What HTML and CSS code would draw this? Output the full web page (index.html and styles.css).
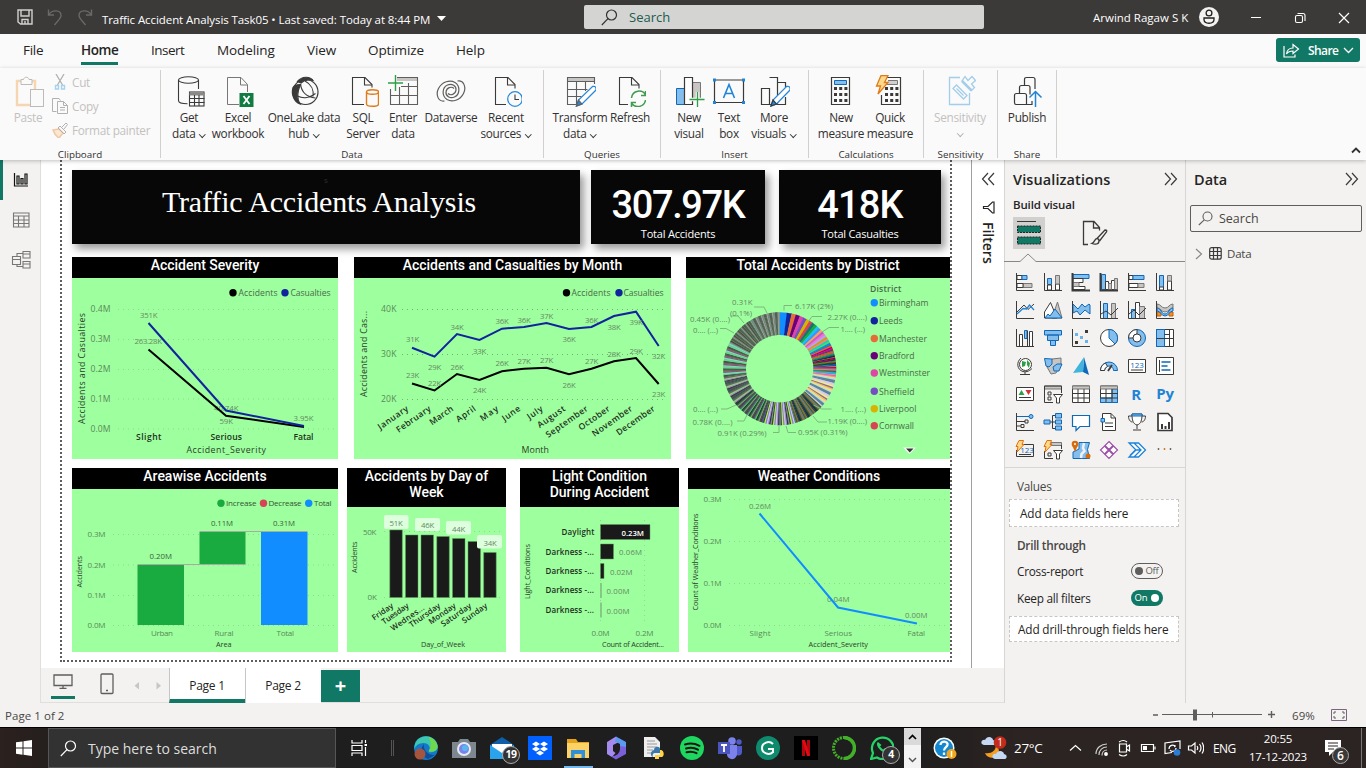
FILE: index.html
```html
<!DOCTYPE html>
<html lang="en">
<head>
<meta charset="utf-8">
<title>Traffic Accident Analysis Task05</title>
<link rel="stylesheet" href="styles.css">
</head>
<body>
<header class="titlebar">
  <div class="quick">
    <svg width="80" height="20" viewBox="0 0 80 20" fill="none">
      <g stroke="#d2d0ce" stroke-width="1.4"><path d="M1 3h14v14H3.500L1 15z"/><path d="M4 3v6h8V3M5 17v-4.500h6V17M8 14v3"/></g>
      <g stroke="#6b6967" stroke-width="1.400"><path d="M31.500 2.500v5.500h5.500M32 7.500c3-5 12-5 12 1 0 3-4 6-6.500 9.500"/><path d="M74.500 2.500v5.500H69M74 7.500c-3-5-12-5-12 1 0 3 4 6 6.500 9.500"/></g>
    </svg>
  </div>
  <div class="doc-name">Traffic Accident Analysis Task05 • Last saved: Today at 8:44 PM</div>
  <svg class="doc-caret" width="10" height="6"><path d="M0 0h9L4.500 5z" fill="#fff"/></svg>
  <div class="top-search">
    <svg width="17" height="17" viewBox="0 0 17 17" fill="none" stroke="#323130" stroke-width="1.200"><circle cx="10.500" cy="6" r="5"/><path d="M7 9.700L.8 16"/></svg>
    <span>Search</span>
  </div>
  <div class="user">Arwind Ragaw S K</div>
  <svg class="avatar" width="20" height="20" viewBox="0 0 20 20"><circle cx="10" cy="10" r="10" fill="#f3f2f1"/><g fill="none" stroke="#201f1e" stroke-width="1.300"><circle cx="10" cy="6" r="2.900"/><path d="M5 11h10v1.500c0 5-10 5-10 0z"/></g></svg>
  <div class="winbtns">
    <svg width="44" height="34" viewBox="0 0 44 34"><path d="M17 17.500h10" stroke="#fff"/></svg>
    <svg width="44" height="34" viewBox="0 0 44 34" fill="none" stroke="#fff" stroke-width="1.100"><rect x="17.500" y="15.500" width="7" height="7" rx="1.500"/><path d="M19.500 13.500h5.500q2 0 2 2v5.500"/></svg>
    <svg width="44" height="34" viewBox="0 0 44 34"><path d="M17 13l10 10M27 13L17 23" stroke="#fff" stroke-width="1.200"/></svg>
  </div>
</header>

<nav class="tabs">
  <a>File</a><a class="active">Home</a><a>Insert</a><a>Modeling</a><a>View</a><a>Optimize</a><a>Help</a>
  <button class="share">
    <svg width="17" height="15" viewBox="0 0 17 15" fill="none" stroke="#fff" stroke-width="1.200"><path d="M1 3v11h11v-2.500"/><path d="M3.500 11c.5-4 3-6 6.500-6V1.500L15.500 6 10 10.500V8c-3 0-5 .8-6.500 3z"/></svg>
    <span>Share</span>
    <svg width="11" height="7" viewBox="0 0 11 7" fill="none" stroke="#fff" stroke-width="1.300"><path d="M1 1l4.500 4.500L10 1"/></svg>
  </button>
</nav>

<section class="ribbon">
  <div class="group g-clip">
    <div class="tools disabled">
      <div class="btn paste">
        <svg width="32" height="32" viewBox="0 0 32 32" fill="none"><path d="M9 6H5v24h13M23 14V6h-4" stroke="#f5d6b0" stroke-width="2.400"/><path d="M9 4.500h2.500c.5-3 5-3 5.500 0H20v5H9z" fill="#fafafa" stroke="#bdbbb9"/><rect x="18.500" y="14.500" width="13" height="17" fill="#fafafa" stroke="#bdbbb9"/></svg>
        <span>Paste</span>
      </div>
      <div class="small-list">
        <div><svg width="16" height="16" viewBox="0 0 16 16" fill="none"><path d="M4 0l6.500 11M12 0L5.500 11" stroke="#b3b1af" stroke-width="1.300"/><path d="M3.500 11.500h3v3.500h-3zM9.500 11.500h3v3.500h-3z" stroke="#a6d2ee" stroke-width="1.400"/></svg><span>Cut</span></div>
        <div><svg width="16" height="16" viewBox="0 0 16 16" fill="none" stroke="#b3b1af"><path d="M4.500 13.500h-4V.5h6.500l1.500 2"/><path d="M5.500 3.500h6l4 4v8h-10z"/><path d="M11.500 3.500v4h4M8 9.500h5M8 12h5"/></svg><span>Copy</span></div>
        <div><svg width="16" height="16" viewBox="0 0 16 16" fill="none"><path d="M1 8l6-1 4 4-4 5C4 14 2 11 1 8z" stroke="#f0c8a4" stroke-width="1.500" fill="#fbe8d4"/><path d="M6 6l2-2 6 6-2 2zM10 5l4-4 1.500 1.500-3.500 4.500" stroke="#b3b1af"/></svg><span>Format painter</span></div>
      </div>
    </div>
    <div class="label">Clipboard</div>
  </div>
  <div class="group g-data">
    <div class="tools">
      <div class="btn w40"><svg width="32" height="32" viewBox="0 0 32 32" fill="none" stroke="#3b3a39" stroke-width="1.100"><ellipse cx="15.500" cy="5" rx="10" ry="3.200"/><path d="M5.500 5v20.500c0 2 4 3.300 9 3.300M25.500 5v9"/><rect x="16.500" y="17" width="14.500" height="14"/><path d="M16.500 19h15" stroke="#8a8886" stroke-width="3"/><path d="M16.500 23.500h15M16.500 27.500h15M21.500 20v11M26 20v11"/></svg><span>Get<br>data<i class="chev"></i></span></div>
      <div class="btn w58"><svg width="32" height="32" viewBox="0 0 32 32" fill="none" stroke="#797775"><path d="M17 29.500H5.500v-27H19l6.500 7V17"/><path d="M18.500 2.500v7.500h7"/><rect x="17.500" y="18" width="14" height="14" fill="#107c41" stroke="none"/><path d="M21.500 21l6 8M27.500 21l-6 8" stroke="#fff" stroke-width="1.800"/></svg><span>Excel<br>workbook</span></div>
      <div class="btn w74"><svg width="32" height="32" viewBox="0 0 32 32" fill="none" stroke="#3b3a39" stroke-width="1.200"><circle cx="17.500" cy="17" r="12.500"/><path d="M9.500 6.500C14 1 22 1 25 5.500c-5-1.500-9-.5-12 2.500z" fill="#3b3a39"/><path d="M5 12.500c-2 7 1 14 7 16.500-3.500-6-3-12 .5-19.500-3 0-6 .5-7.500 3z" fill="#3b3a39"/><path d="M12.500 9c1 8 6 13 15 14M17 6c6 3 9 9 8 15.500M9.500 21c6 3 13 1.500 18-2.500"/></svg><span>OneLake data<br>hub<i class="chev"></i></span></div>
      <div class="btn w44"><svg width="32" height="32" viewBox="0 0 32 32" fill="none" stroke="#3b3a39" stroke-width="1.100"><path d="M17 29.500H5.500v-27H18l7 7v3"/><path d="M17.500 2.500v7.500h7.500"/><g stroke="#e07b1a" stroke-width="1.400"><ellipse cx="25.500" cy="17" rx="6" ry="2.200"/><path d="M19.500 17v12c0 3 12 3 12 0V17"/></g></svg><span>SQL<br>Server</span></div>
      <div class="btn w36"><svg width="32" height="32" viewBox="0 0 32 32" fill="none" stroke="#605e5c" stroke-width="1.100"><path d="M10 4h20.500" stroke="#c8c6c4" stroke-width="4"/><path d="M10 2.500h20.500v27h-27V14M3.500 20.500h27M14 11.500h16.500M12.500 12v17M21.500 8v21"/><path d="M1 8h15M8.500 0v16" stroke="#2f9e44" stroke-width="1.400"/></svg><span>Enter<br>data</span></div>
      <div class="btn w60"><svg width="32" height="32" viewBox="0 0 32 32" fill="none" stroke="#605e5c" stroke-width="1.200"><path d="M9.500 26C3 27 .5 19.500 3.500 13.500 7 6.500 15 4.500 20 7.500c5.500 3.500 5 12-.5 14.500-4.500 2-9-1-8.500-5 .5-4.500 5.500-6 8-3.500"/><path d="M22.500 6c6.500-1 9 6.500 6 12.500-3.500 7-11.500 9-16.500 6-5.500-3.500-5-12 .5-14.500 4.500-2 9 1 8.500 5-.5 4.500-5.500 6-8 3.500"/></svg><span>Dataverse</span></div>
      <div class="btn w50"><svg width="32" height="32" viewBox="0 0 32 32" fill="none" stroke="#3b3a39" stroke-width="1.100"><path d="M16 29.500H5.500v-27H18l7 7v4"/><path d="M17.500 2.500v7.500h7.500"/><circle cx="25" cy="24" r="7.300" stroke="#2b88d8" stroke-width="1.300"/><path d="M25 19.500V24.500h4"/></svg><span>Recent<br>sources<i class="chev"></i></span></div>
    </div>
    <div class="label">Data</div>
  </div>
  <div class="group g-query">
    <div class="tools">
      <div class="btn w56"><svg width="32" height="32" viewBox="0 0 32 32" fill="none" stroke="#605e5c" stroke-width="1.100"><path d="M3 4h27" stroke="#c8c6c4" stroke-width="4"/><path d="M30.500 9V2.500h-27v27H14M3.500 6.500h27M3.500 14.500h20M3.500 21.500h14M12.500 7v22M21.500 7v9"/><path d="M12.500 31l2-6L28.500 11.500q4-1 3.500 3.500L18 29z" fill="#fff" stroke="#2b88d8" stroke-width="1.300"/><path d="M12.500 31l2-6 3.500 4z" fill="#2b88d8"/></svg><span>Transform<br>data<i class="chev"></i></span></div>
      <div class="btn w44"><svg width="32" height="32" viewBox="0 0 32 32" fill="none" stroke="#3b3a39" stroke-width="1.100"><path d="M14 29.500H5.500v-27H18l7 7v4"/><path d="M17.500 2.500v7.500h7.500"/><g stroke="#3f9b4f" stroke-width="1.500"><path d="M17.500 23c1-8 11-9 14-3M31.500 16v4.500H27M31.500 25c-1 7-10 9-14 3M17.500 32v-4.500H22"/></g></svg><span>Refresh</span></div>
    </div>
    <div class="label">Queries</div>
  </div>
  <div class="group g-insert">
    <div class="tools">
      <div class="btn w40"><svg width="32" height="32" viewBox="0 0 32 32" fill="none"><path d="M3.500 13.500h8v16h-8z" fill="#83beec" stroke="#1068b8"/><path d="M19.500 7.500h8v17h-8z" fill="#c8c6c4" stroke="#797775"/><path d="M11.500 2.500h8v27h-8z" fill="#fff" stroke="#3b3a39" stroke-width="1.200"/><path d="M16.500 24.500h15M24.500 17v15" stroke="#fafafa" stroke-width="3.500"/><path d="M16.500 24.500h15M24.500 17v15" stroke="#2f9e44" stroke-width="1.300"/></svg><span>New<br>visual</span></div>
      <div class="btn w40"><svg width="32" height="32" viewBox="0 0 32 32" fill="none"><path d="M1.500 5h29v22.500h-29z" stroke="#3b3a39" stroke-width="1.200"/><path d="M0 3.500h3v3H0zM29 3.500h3v3h-3zM0 26h3v3H0zM29 26h3v3h-3z" fill="#1f84d6"/><path d="M10.500 23L16 9.500 21.500 23M12.500 18.500h7" stroke="#1f84d6" stroke-width="1.600"/></svg><span>Text<br>box</span></div>
      <div class="btn w50"><svg width="32" height="32" viewBox="0 0 32 32" fill="none" stroke="#3b3a39" stroke-width="1.200"><path d="M3.500 13.500h8v16h-8zM11.500 2.500h8v27h-8M19.500 7.500h8v5M27.500 22v7.500H19"/><path d="M13 31l2-6L28.500 11.500q4-1 3.500 3.500L18.500 29z" fill="#fff" stroke="#2b88d8" stroke-width="1.300"/><path d="M13 31l2-6 3.500 4z" fill="#2b88d8"/></svg><span>More<br>visuals<i class="chev"></i></span></div>
    </div>
    <div class="label">Insert</div>
  </div>
  <div class="group g-calc">
    <div class="tools">
      <div class="btn w50"><svg width="32" height="32" viewBox="0 0 32 32" fill="none"><path d="M6.500 2.500h18v27h-18z" stroke="#3b3a39" stroke-width="1.200"/><path d="M9.500 5.500h12v4h-12z" fill="#83beec" stroke="#1068b8"/><path d="M9 13.500h14M9 19.500h14M9 25.500h14" stroke="#3b3a39" stroke-width="3" stroke-dasharray="3 2.200"/></svg><span>New<br>measure</span></div>
      <div class="btn w48"><svg width="32" height="32" viewBox="0 0 32 32" fill="none"><path d="M12 2.500h14.500v27h-19V20" stroke="#3b3a39" stroke-width="1.200"/><path d="M14 5.500h9.500v4H12" fill="#d2d0ce" stroke="#797775"/><path d="M11 13.500h14M11 19.500h14M11 25.500h14" stroke="#3b3a39" stroke-width="3" stroke-dasharray="3 2.200"/><path d="M7 .5h7l-3.500 7H14L4 19l2.500-8H2.500z" fill="#fcd98b" stroke="#e07b1a" stroke-width="1.300"/></svg><span>Quick<br>measure</span></div>
    </div>
    <div class="label">Calculations</div>
  </div>
  <div class="group g-sens">
    <div class="tools disabled">
      <div class="btn w60"><svg width="32" height="32" viewBox="0 0 32 32" fill="none" stroke="#a3cde8" stroke-width="1.300"><path d="M16 2.500H5.500v27h20V18"/><path d="M9 13.500l3.500-3.500L23 20.500l-3.500 3.500zM12.500 13.500l7 7"/><path d="M18 6l9.500 9.500 3-3-3-3.500 4-3.500-3.500-4-4 4-3-4z"/><path d="M18 6l9.500 9.500" stroke-width="2.500"/></svg><span>Sensitivity<br><i class="chev lone"></i></span></div>
    </div>
    <div class="label">Sensitivity</div>
  </div>
  <div class="group g-share">
    <div class="tools">
      <div class="btn w58"><svg width="32" height="32" viewBox="0 0 32 32" fill="none" stroke="#3b3a39" stroke-width="1.200"><path d="M5.500 18.500h8q2 0 2 2v9H5q-1.500 0-1.500-2v-7q0-2 2-2zM8.500 18v-5.500q0-2 2-2H17q2 0 2 2v7M13.500 10V4.500q0-2 2-2H22q2 0 2 2V14M15.500 29.500H21V26"/><path d="M24.500 32V16.500M18.500 22.500l6-6 6 6" stroke="#1f84d6" stroke-width="1.500"/></svg><span>Publish</span></div>
    </div>
    <div class="label">Share</div>
  </div>
  <svg class="collapse" width="10" height="7" viewBox="0 0 10 7"><path d="M1 5.500l4-4 4 4" fill="none" stroke="#323130" stroke-width="1.800"/></svg>
</section>

<main class="workspace">
  <aside class="rail">
    <div class="sel"><svg width="18" height="18" viewBox="0 0 18 18" fill="none" stroke="#111" stroke-width="1.200"><path d="M2.500 2v13H16M5 5h2v8H5zM9 7.500h2V13H9zM13 3h2v10h-2z"/></svg></div>
    <div><svg width="18" height="18" viewBox="0 0 18 18" fill="none" stroke="#797775" stroke-width="1.100"><path d="M1.500 2h15.500v14H1.500zM1.500 5h15.500M1.500 9h15.500M1.500 12.500h15.500M6.500 5v11M12 5v11"/></svg></div>
    <div><svg width="20" height="20" viewBox="0 0 20 20" fill="none" stroke="#797775" stroke-width="1.100"><path d="M1.500 6.500h8v8h-8zM1.500 9.500h8M12 1.500h7v6.500h-7zM12 4h7M12 11.500h7v6.500h-7zM12 14h7M6 6V3.500h6M6 15v1.500h6"/></svg></div>
  </aside>

  <div class="center">
    <div class="upper">
      <div class="canvas">
        <div class="page">
          <div class="row row1">
            <div class="banner"><small>s</small>Traffic Accidents Analysis</div>
            <div class="card c1"><b>307.97K</b><span>Total Accidents</span></div>
            <div class="card c2"><b>418K</b><span>Total Casualties</span></div>
          </div>
          <div class="row row2">
            <div class="visual v266"><h3>Accident Severity</h3>
              <svg width="266" height="181" viewBox="72 278 266 181">
                <g class="grid"><path d="M118 309.500H334M118 339.500H334M118 369.500H334M118 399H334M118 429H334"/></g>
                <circle cx="233" cy="292.700" r="3.700" fill="#000"/><text class="lg" x="238.500" y="296" textLength="39">Accidents</text>
                <circle cx="285" cy="292.700" r="3.700" fill="#12239e"/><text class="lg" x="290.500" y="296" textLength="40">Casualties</text>
                <g class="ax"><text x="90.500" y="312" textLength="20">0.4M</text><text x="90.500" y="342" textLength="20">0.3M</text><text x="90.500" y="372" textLength="20">0.2M</text><text x="90.500" y="402" textLength="20">0.1M</text><text x="90.500" y="432" textLength="20">0.0M</text></g>
                <text class="tt" transform="translate(85 424) rotate(-90)" textLength="111">Accidents and Casualties</text>
                <g class="dl"><text x="140" y="318" textLength="17.500">351K</text><text x="134.500" y="344" textLength="27.500">263.28K</text><text x="214" y="411" textLength="24.500">40.74K</text><text x="219.500" y="424" textLength="13.500">59K</text><text x="293.500" y="421" textLength="20">3.95K</text></g>
                <path class="ln" stroke="#000" d="M148.500 349.500L226 415.700L304 427"/>
                <path class="ln" stroke="#12239e" d="M148.500 323L226 410.500L304 426"/>
                <g class="cat"><text x="136" y="439.700" textLength="25.500">Slight</text><text x="210.500" y="439.700" textLength="31.500">Serious</text><text x="293.500" y="439.700" textLength="20">Fatal</text></g>
                <text class="tt" x="186.500" y="453" textLength="79.500">Accident_Severity</text>
              </svg></div>
            <div class="visual v317"><h3>Accidents and Casualties by Month</h3>
              <svg width="317" height="181" viewBox="354 278 317 181">
                <g class="grid strong"><path d="M402 309.500H667M402 354.500H667M402 399.500H667"/></g>
                <circle cx="566.500" cy="292.700" r="3.700" fill="#000"/><text class="lg" x="571.500" y="296" textLength="39">Accidents</text>
                <circle cx="619" cy="292.700" r="3.700" fill="#12239e"/><text class="lg" x="623.500" y="296" textLength="40">Casualties</text>
                <g class="ax"><text x="381" y="312" textLength="15.500">40K</text><text x="381" y="357" textLength="15.500">30K</text><text x="381" y="402" textLength="15.500">20K</text></g>
                <text class="tt" transform="translate(367 397) rotate(-90)" textLength="86">Accidents and Cas...</text>
                <path class="ln" stroke="#12239e" d="M412 347.700L434.500 356.700L457 334L479.500 340L502 328.700L524 327L546.500 323L569 329L591.500 327L614 316L636 311.700L658.700 346"/>
                <path class="ln" stroke="#000" d="M412 383.500L434.500 390.500L457 374L479.500 380L502 371.200L524 368.700L546.500 367.700L569 374.300L591.500 368.700L614 361.300L636 358L658.700 384"/>
                <g class="dl mid"><text x="412.500" y="342">31K</text><text x="434.500" y="370">29K</text><text x="457" y="329.500">34K</text><text x="479.500" y="353.500">33K</text><text x="502" y="323.500">36K</text><text x="524" y="322.500">36K</text><text x="546.500" y="318.500">37K</text><text x="569" y="342">36K</text><text x="591.500" y="322.500">36K</text><text x="614" y="330">38K</text><text x="636" y="325">39K</text><text x="658.500" y="359">32K</text>
                <text x="412.500" y="378">23K</text><text x="434.500" y="385.500">22K</text><text x="457" y="369.500">26K</text><text x="479.500" y="393">24K</text><text x="502" y="366">26K</text><text x="524" y="363.500">27K</text><text x="546.500" y="362.500">27K</text><text x="569" y="388">26K</text><text x="591.500" y="363.500">27K</text><text x="614" y="356.500">28K</text><text x="636" y="353.500">29K</text><text x="658.500" y="397">23K</text></g>
                <g class="cat rot"><text transform="translate(409 410) rotate(-35)" textLength="35">January</text><text transform="translate(431.500 410) rotate(-35)" textLength="40">February</text><text transform="translate(454 410) rotate(-35)" textLength="27">March</text><text transform="translate(476.500 410) rotate(-35)" textLength="22">April</text><text transform="translate(499 410) rotate(-35)" textLength="20">May</text><text transform="translate(521 410) rotate(-35)" textLength="20">June</text><text transform="translate(543.500 410) rotate(-35)" textLength="17">July</text><text transform="translate(566 410) rotate(-35)" textLength="32">August</text><text transform="translate(588.500 410) rotate(-35)" textLength="49">September</text><text transform="translate(610.500 410) rotate(-35)" textLength="36">October</text><text transform="translate(633 410) rotate(-35)" textLength="47">November</text><text transform="translate(655.500 410) rotate(-35)" textLength="45">December</text></g>
                <text class="tt" x="521.500" y="453" textLength="27.500">Month</text>
              </svg></div>
            <div class="visual v264"><h3>Total Accidents by District</h3>
              <svg width="264" height="181" viewBox="686 278 264 181">
                <g id="donut"></g>
                <path class="lead" d="M784 310.500v-5h8M808 322l4-5.500h10M822 332l7-4.500h10M813.500 405l8 4h10M813 416l5 6h9M786 426l2 6.500h8M779 426v6.500h-6M747 415l-3 6h-7M736 405l-9 4h-6M734 333l-8-4.500h-6M744 323l-6-7h-7M767 313l-3-6h-10"/>
                <g class="dl"><text x="795" y="309" textLength="38">6.17K (2%)</text><text x="827.500" y="320" textLength="39.500">2.27K (0....)</text><text x="840.500" y="332" textLength="24.500">1.... (...)</text><text x="732" y="305" textLength="20.500">0.31K</text><text x="730" y="316" textLength="22">(0.1%)</text><text x="690" y="322" textLength="40">0.45K (0....)</text><text x="693" y="333" textLength="25">0.... (...)</text><text x="693" y="411.500" textLength="25">0.... (...)</text><text x="692.500" y="425" textLength="40">0.78K (0....)</text><text x="717.500" y="436" textLength="49">0.91K (0.29%)</text><text x="798" y="435" textLength="49.500">0.95K (0.31%)</text><text x="827.500" y="424" textLength="39.500">1.19K (0....)</text><text x="840.500" y="412" textLength="25.500">1.... (...)</text></g>
                <text class="lg bold" x="870" y="291.500" textLength="31.500">District</text>
                <g class="lg"><text x="879" y="306" textLength="49.500">Birmingham</text><text x="879" y="324" textLength="23.500">Leeds</text><text x="879" y="342" textLength="48">Manchester</text><text x="879" y="359" textLength="35.500">Bradford</text><text x="879" y="376.300" textLength="51">Westminster</text><text x="879" y="394.600" textLength="35.500">Sheffield</text><text x="879" y="412" textLength="37.500">Liverpool</text><text x="879" y="429" textLength="35">Cornwall</text></g>
                <circle cx="874.300" cy="302.700" r="3.700" fill="#118dff"/><circle cx="874.300" cy="320.700" r="3.700" fill="#12239e"/><circle cx="874.300" cy="338.500" r="3.700" fill="#e66c37"/><circle cx="874.300" cy="355.700" r="3.700" fill="#6b007b"/><circle cx="874.300" cy="373" r="3.700" fill="#e044a7"/><circle cx="874.300" cy="391.300" r="3.700" fill="#744ec2"/><circle cx="874.300" cy="408.700" r="3.700" fill="#d9b300"/><circle cx="874.300" cy="425.700" r="3.700" fill="#d64550"/>
                <path d="M903 447.500h13l-6.500 6.500z" fill="#fff"/><path d="M906 448.500h7.500l-3.700 4z" fill="#333"/>
              </svg></div>
          </div>
          <div class="row row3">
            <div class="visual v266"><h3>Areawise Accidents</h3>
              <svg width="266" height="163" viewBox="72 489 266 163">
                <g class="grid"><path d="M113 534.500H334M113 565H334M113 595.500H334M113 625.500H334"/></g>
                <circle cx="221" cy="503.300" r="3.700" fill="#1aab40"/><text class="lg s" x="226" y="506.300" textLength="30.500">Increase</text>
                <circle cx="263.500" cy="503.300" r="3.700" fill="#d64554"/><text class="lg s" x="268.500" y="506.300" textLength="33">Decrease</text>
                <circle cx="308.700" cy="503.300" r="3.700" fill="#118dff"/><text class="lg s" x="314" y="506.300" textLength="17.500">Total</text>
                <g class="ax s"><text x="87.500" y="537" textLength="18">0.3M</text><text x="87.500" y="567.500" textLength="18">0.2M</text><text x="87.500" y="598" textLength="18">0.1M</text><text x="87.500" y="628" textLength="18">0.0M</text></g>
                <text class="tt s" transform="translate(82 587.500) rotate(-90)" textLength="31.500">Accidents</text>
                <path d="M137.500 565h46.500v60h-46.500zM199.500 532h46v32.500h-46z" fill="#1aab40"/><path d="M261 532h46.500v93H261z" fill="#118dff"/>
                <path d="M137.500 564.500h108M199.500 531.500h108" stroke="#a8aaa6"/>
                <g class="dl dark"><text x="149.500" y="559" textLength="22.500">0.20M</text><text x="211" y="526" textLength="22">0.11M</text><text x="273" y="526" textLength="22">0.31M</text></g>
                <g class="ax s"><text x="151" y="636.300" textLength="22">Urban</text><text x="214.500" y="636.300" textLength="19">Rural</text><text x="276.500" y="636.300" textLength="17.500">Total</text></g>
                <text class="tt s" x="216" y="647" textLength="15.500">Area</text>
              </svg></div>
            <div class="visual v159"><h3 class="two">Accidents by Day of<br>Week</h3>
              <svg width="159" height="145" viewBox="347 507 159 145">
                <g class="grid"><path d="M384 531.500H502M384 597.500H502"/></g>
                <g class="ax s"><text x="363" y="534.500" textLength="13.500">50K</text><text x="367.500" y="600" textLength="9.500">0K</text></g>
                <text class="tt s" transform="translate(357 573) rotate(-90)" textLength="31.500">Accidents</text>
                <g fill="#1a1a1a" stroke="#5b9a5b" stroke-width=".5"><path d="M389.800 530h12.500v67.500h-12.500zM405.500 535h12.500v62.500h-12.500zM421 535h12.500v62.500H421zM436.800 536.500h12.500v61h-12.500zM452.500 538.500H465v59h-12.500zM468 541.500h12.500v56H468zM483.700 552.500h12.500v45h-12.500z"/></g>
                <g fill="#ddffdd"><rect x="384" y="515" width="24.500" height="14" rx="2"/><rect x="415" y="518" width="25" height="13" rx="2"/><rect x="446" y="521" width="25" height="13.500" rx="2"/><rect x="477" y="535" width="25" height="13.500" rx="2"/></g>
                <g class="dl mid"><text x="396" y="526">51K</text><text x="427.500" y="528">46K</text><text x="458.500" y="532">44K</text><text x="490" y="546">34K</text></g>
                <g class="cat rot s"><text transform="translate(394 607) rotate(-35)" textLength="24">Friday</text><text transform="translate(409.500 607) rotate(-35)" textLength="31">Tuesday</text><text transform="translate(425 609) rotate(-35)" textLength="39">Wednes...</text><text transform="translate(441 607) rotate(-35)" textLength="36">Thursday</text><text transform="translate(456.500 607) rotate(-35)" textLength="31">Monday</text><text transform="translate(472 607) rotate(-35)" textLength="35">Saturday</text><text transform="translate(488 607) rotate(-35)" textLength="29">Sunday</text></g>
                <text class="tt s" x="421" y="647" textLength="44">Day_of_Week</text>
              </svg></div>
            <div class="visual v159 light"><h3 class="two">Light Condition<br>During Accident</h3>
              <svg width="159" height="145" viewBox="520 507 159 145">
                <g class="grid"><path d="M600.500 520V621M644.500 520V621"/></g>
                <text class="tt s" transform="translate(530 599) rotate(-90)" textLength="55">Light_Conditions</text>
                <g class="cat s"><text x="561.500" y="535" textLength="33">Daylight</text><text x="545.500" y="554.500" textLength="48.500">Darkness -...</text><text x="545.500" y="574" textLength="48.500">Darkness -...</text><text x="545.500" y="593" textLength="48.500">Darkness -...</text><text x="545.500" y="613" textLength="48.500">Darkness -...</text></g>
                <path d="M600.500 524.500H650v15h-49.500zM600.500 544h13v15h-13zM600.500 563.500h3.500v15h-3.500z" fill="#1a1a1a" stroke="#5b9a5b" stroke-width=".5"/><path d="M601 583v15M601 602.500v15" stroke="#7dba7d" stroke-width="1.500"/>
                <text class="dl white" x="621.500" y="535.700" textLength="22.500">0.23M</text>
                <g class="dl"><text x="619" y="555" textLength="23">0.06M</text><text x="610" y="575" textLength="22.500">0.02M</text><text x="606.500" y="594" textLength="23">0.00M</text><text x="606.500" y="614" textLength="23">0.00M</text></g>
                <g class="ax s"><text x="591.500" y="636" textLength="18">0.0M</text><text x="635.500" y="636" textLength="18">0.2M</text></g>
                <text class="tt s" x="602" y="647" textLength="62">Count of Accident...</text>
              </svg></div>
            <div class="visual v262"><h3>Weather Conditions</h3>
              <svg width="262" height="163" viewBox="688 489 262 163">
                <g class="grid"><path d="M729 499.500H946M729 541.500H946M729 583.500H946M729 625.500H946"/></g>
                <g class="ax s"><text x="703.500" y="502" textLength="18">0.3M</text><text x="703.500" y="544" textLength="18">0.2M</text><text x="703.500" y="586" textLength="18">0.1M</text><text x="703.500" y="628" textLength="18">0.0M</text></g>
                <text class="tt s" transform="translate(698 610.500) rotate(-90)" textLength="97">Count of Weather_Conditions</text>
                <g class="dl"><text x="749" y="509" textLength="22">0.26M</text><text x="827" y="602" textLength="22.500">0.04M</text><text x="905" y="618" textLength="22.500">0.00M</text></g>
                <path class="ln" stroke="#118dff" d="M759.500 513.500L838 607.500L917 623.500"/>
                <g class="ax s"><text x="749.500" y="636.300" textLength="21">Slight</text><text x="824.500" y="636.300" textLength="27.500">Serious</text><text x="907.500" y="636.300" textLength="17.500">Fatal</text></g>
                <text class="tt s" x="808.500" y="647" textLength="59.500">Accident_Severity</text>
              </svg></div>
          </div>
        </div>
      </div>
      <div class="filters">
        <svg width="14" height="14" viewBox="0 0 14 14" fill="none" stroke="#3b3a39" stroke-width="1.200"><path d="M7 1L1.500 7 7 13M13 1L7.500 7l5.500 6"/></svg>
        <svg width="13" height="13" viewBox="0 0 13 13" fill="none" stroke="#252423" stroke-width="1.200"><path d="M12 1v11h-1.500L6 7.500H1.500v-2H6L10.500 1z"/></svg>
        <span>Filters</span>
      </div>
    </div>
    <div class="pagetabs">
      <div class="dev on"><svg width="20" height="16" viewBox="0 0 20 16" fill="none" stroke="#605e5c" stroke-width="1.300"><path d="M1 1h18v10.500H1zM10 11.500V14M6.500 14.300h7"/></svg></div>
      <div class="dev"><svg width="14" height="22" viewBox="0 0 14 22" fill="none" stroke="#605e5c" stroke-width="1.300"><rect x="1" y="1" width="12" height="19.500" rx="1"/><path d="M6 17.500h2"/></svg></div>
      <svg class="pgarrows" width="28" height="10" viewBox="0 0 28 10" fill="#c8c6c4"><path d="M5 1v7.500L.5 4.700zM22.500 1v7.500L27 4.700z"/></svg>
      <div class="pg on">Page 1</div><div class="pg">Page 2</div><div class="plus">+</div>
    </div>
  </div>

  <aside class="viz">
    <div class="head"><span>Visualizations</span><svg width="14" height="14" viewBox="0 0 14 14" fill="none" stroke="#3b3a39" stroke-width="1.200"><path d="M1 1l5.500 6L1 13M7 1l5.500 6L7 13"/></svg></div>
    <div class="sub">Build visual</div>
    <div class="modes">
      <div class="mode on"><svg width="26" height="26" viewBox="0 0 26 26"><path d="M1 1.500h19" stroke="#3b3a39"/><path d="M1.500 6h23v6.500h-23zM1.500 17h23v7h-23z" fill="#117865" stroke="#252423" stroke-dasharray="2 1"/></svg></div>
      <div class="mode"><svg width="26" height="26" viewBox="0 0 26 26" fill="none" stroke="#3b3a39" stroke-width="1.300"><path d="M6 24.500H1.500v-23H12l5.500 6v3M11.500 1.500V8h6M10 23.500c2.500-.5 2.500-5 5-5s3 4.500-.5 5.500c-1.500.4-3 .2-4.500-.5zM15 18.500L23 10q2.500 0 1.500 2L17.500 21"/></svg></div>
    </div>
    <svg class="notch" width="181" height="9" viewBox="0 0 181 9"><path d="M0 8.500h16l8-7.500 8 7.500h149" fill="none" stroke="#8a8886"/></svg>
    <div class="vgrid">
      <svg viewBox="0 0 20 20"><path class="w" d="M2 3.500h5v4H2z"/><path class="b" d="M7 3.500h5v4H7z"/><path class="g" d="M8 11.500h9v4H8z"/><path class="w" d="M2 11.500h6v4H2z"/><path class="k" d="M1.500 1v17.500H19"/></svg>
      <svg viewBox="0 0 20 20"><path class="b" d="M4.500 6.500h4v6h-4z"/><path class="w" d="M4.500 13h4v5h-4zM12.500 12h4v6h-4z"/><path class="g" d="M12.500 3.500h4v8.500h-4z"/><path class="k" d="M1.500 1v17.500H19"/></svg>
      <svg viewBox="0 0 20 20"><path class="b" d="M2 2.500h16v4H2z"/><path class="w" d="M2 6.500h10v4H2zM2 14.500h12v3H2z"/><path class="g" d="M2 10.500h6v4H2z"/><path class="k" d="M1.500 1v17.500H19" stroke-width="2"/></svg>
      <svg viewBox="0 0 20 20"><path class="b" d="M2.500 2.500h4v15h-4z"/><path class="w" d="M6.500 9.500h3v8h-3zM12.500 8.500h3v9h-3z"/><path class="g" d="M9.500 11.500h3v6h-3zM15.500 6.500h3v11h-3z"/><path class="k" d="M1.500 1v17.500H19" stroke-width="2"/></svg>
      <svg viewBox="0 0 20 20"><path class="w" d="M2 3.500h4v4H2zM2 11.500h9v4H2z"/><path class="b" d="M6 3.500h11v4H6z"/><path class="g" d="M11 11.500h6v4h-6z"/><path class="k" d="M1.500 1v17.500H19"/></svg>
      <svg viewBox="0 0 20 20"><path class="b" d="M4.500 3.500h4v12h-4z"/><path class="w" d="M12.500 9h4v9h-4zM4.500 15h4v3h-4z"/><path class="g" d="M12.500 3.500h4V9h-4z"/><path class="k" d="M1.500 1v17.500H19"/></svg>

      <svg viewBox="0 0 20 20"><path class="k" d="M1.500 1v17.500H19M2 12l7-7 4 4.500L19 4"/><path class="bl" d="M2 14l6-5.500L11.500 9 14.500 5l4.500 5"/></svg>
      <svg viewBox="0 0 20 20"><path class="g" d="M9 18l5.500-16 4.500 16z"/><path class="w" d="M1.500 18v-6l6-9.500L14 18z"/><path class="b" d="M2 18l3-4 2 2 5-7 7 9z"/></svg>
      <svg viewBox="0 0 20 20"><path class="b" d="M2 4l5 5 4-5 3 3 4-3 1 1v9l-5-4-5 5-3-4-4 2z"/><path class="k" d="M1.500 1v17.500H19"/></svg>
      <svg viewBox="0 0 20 20"><path class="b" d="M4.500 3.500h4v15h-4z"/><path class="g" d="M12.500 3.500h4v15h-4z"/><path class="k" d="M1.500 1v17.500H19M2 14l5-3 5 4 7-7"/></svg>
      <svg viewBox="0 0 20 20"><path class="b" d="M4.500 9.500h4v9h-4z"/><path class="w" d="M8.500 2.500h4v16h-4z"/><path class="g" d="M12.500 6.500h5v12h-5z"/><path class="k" d="M1.500 1v17.500H19M2 14l5-4 5 5 7-7"/></svg>
      <svg viewBox="0 0 20 20"><path class="o" d="M2 12h4v4H2zM14 12h4v4h-4z"/><path class="g" d="M2 4c4 0 4 4 8 4s4-4 8-4v4c-4 0-4 4-8 4s-4-4-8-4z"/><path class="b" d="M2 8c4 0 4 6 8 6s4-6 8-6v3c-4 0-4 5-8 5s-4-5-8-5z"/><path class="k" d="M1.500 1v17.500H19"/></svg>

      <svg viewBox="0 0 20 20"><path class="w" d="M4.500 6.500h3v12h-3zM14.500 3.500h3v15h-3z"/><path class="b" d="M9.500 2.500h2.500v8H9.500z"/><path class="k" d="M1.500 1v17.500H19M12.500 2.500v16"/></svg>
      <svg viewBox="0 0 20 20"><path class="b" d="M1.500 2.500h17v4.500h-17zM4.500 7h11v5.500h-11zM7.500 12.500h5v5h-5z"/></svg>
      <svg viewBox="0 0 20 20"><path class="k" d="M1.500 1v17.500H19"/><path d="M14 2h3v3h-3zM4 13h3v3H4z" fill="#3b3a39"/><path d="M4 5h3v3H4zM9 8h3v3H9zM14 12h3v3h-3z" fill="#6cb3ea"/></svg>
      <svg viewBox="0 0 20 20"><circle class="w" cx="10" cy="10" r="8.500"/><path class="b" d="M10 1.500a8.500 8.500 0 0 1 6 14.500L10 10z"/></svg>
      <svg viewBox="0 0 20 20"><circle class="b" cx="10" cy="10" r="8.500"/><path class="w" d="M10 1.500a8.500 8.500 0 0 0-8.500 8.500H6a4 4 0 0 1 4-4z"/><circle cx="10" cy="10" r="4" class="w"/></svg>
      <svg viewBox="0 0 20 20"><path class="w" d="M1.500 1.500h17v17h-17zM9.500 10.500h9M14.500 2v16"/><path class="b" d="M1.500 1.500h8v17h-8z"/><path class="k" d="M9.500 6.500h5M1.500 10.500h17"/></svg>

      <svg viewBox="0 0 20 20"><circle class="w" cx="10.500" cy="8.500" r="6"/><path d="M7 5l4 1-1 4-3 1zM12 4l3 3-1 5-2-3z" fill="#2f9e44"/><path class="k" d="M6 2C1 6 2 14 8 15.500c4 1 7-1 9-3M10 15.500V18M5 18.500h10"/></svg>
      <svg viewBox="0 0 20 20"><path class="g" d="M9 3l9-1v7l-5 8-5 1-4-7z"/><path class="b" d="M1.500 2.500L9 3v5l-3 3-3-1zM10 11l4-3h5l-3 7h-5z"/></svg>
      <svg viewBox="0 0 20 20"><path d="M13 1l5 18-6-3z" fill="#1068b8"/><path d="M13 1L2 17l10-1z" fill="#40b4dc"/></svg>
      <svg viewBox="0 0 20 20"><path class="b" d="M1.500 14.500a8.500 8.500 0 0 1 17 0h-4a4.500 4.500 0 0 0-9 0z"/><path class="w" d="M1.500 14.500a8.500 8.500 0 0 1 5-7.500l2 3.500a4.500 4.500 0 0 0-3 4z"/><path class="k" d="M9 15l4-6" stroke-width="1.800"/></svg>
      <svg viewBox="0 0 20 20"><path class="w" d="M1.500 3.500h17v13h-17zM4 14h12"/><text x="10" y="11.500" class="n">123</text></svg>
      <svg viewBox="0 0 20 20"><path class="w" d="M1.500 1.500h17v17h-17z"/><path d="M6.500 6h9M6.500 10h6M6.500 14h9" stroke="#1068b8" stroke-width="1.500"/><path class="k" d="M4.500 4v12"/></svg>

      <svg viewBox="0 0 20 20"><path class="w" d="M1.500 3.500h17v13h-17zM4 13.500h12"/><path d="M3.500 11L6.500 6l3 5z" fill="#2f9e44"/><path d="M10.500 6h6l-3 5z" fill="#d13438"/></svg>
      <svg viewBox="0 0 20 20"><path class="g" d="M1.500 2h17v3h-17z"/><path class="k" d="M10 18.500H1.500V2H18.500v7M5 8h3v3H5zM5 13h3v3H5z"/><path class="w" d="M10.500 10.500h9L16.500 14v5h-3v-5z"/></svg>
      <svg viewBox="0 0 20 20"><path class="w" d="M1.500 2h17v16.500h-17z"/><path class="g" d="M1.500 2h17v3h-17z"/><path class="k" d="M2 9.500h17M2 14h17M7 5v13M13 5v13"/></svg>
      <svg viewBox="0 0 20 20"><path class="w" d="M1.500 2h17v16.500h-17z"/><path class="b" d="M13 5h5.500v13.500H1.500V14H13z"/><path class="g" d="M1.500 2h17v3h-17z"/><path class="k" d="M2 9.500h17M2 14h17M7 5v13M13 5v13"/></svg>
      <svg viewBox="0 0 20 20"><text x="9" y="16" class="rp">R</text></svg>
      <svg viewBox="0 0 20 20"><text x="10" y="15" class="rp">Py</text></svg>

      <svg viewBox="0 0 20 20"><path class="k" d="M1.500 1v17.500H19M2 9.500h8M2 14h4M10 8h3v3h-3zM6 12.500h3v3H6z"/><path d="M2 4.500h12" stroke="#1068b8"/><circle class="b" cx="16" cy="4.500" r="2"/></svg>
      <svg viewBox="0 0 20 20"><path class="k" d="M6 10h6M9.500 3.500v13H12M9.500 3.500H12"/><path class="b" d="M1 8h6v4H1zM12.500 1.500h6v4.500h-6zM12.500 8h6v4h-6zM12.500 14h6v4h-6z"/></svg>
      <svg viewBox="0 0 20 20"><path d="M1.500 3.500h17v11H9l-4 4v-4H1.500z" fill="#fff" stroke="#1068b8" stroke-width="1.200"/></svg>
      <svg viewBox="0 0 20 20"><path class="w" d="M3.500 1.500h8.500l4.500 4.500v12.500h-13z"/><path class="k" d="M12 1.500V6h4.500M6 11h8M6 14.500h8"/><path class="b" d="M2 6.500h3.500v3.500H2z"/></svg>
      <svg viewBox="0 0 20 20"><path class="k" d="M5 4H1.500c0 4 2 6 4 6M15 4h3.500c0 4-2 6-4 6M10 13v4M6 18h8"/><path class="w" d="M5 2h10c0 6-1 10-5 11-4-1-5-5-5-11z"/><path class="b" d="M5 2h10v2H5z"/></svg>
      <svg viewBox="0 0 20 20"><path class="w" d="M3 1.500h10l4 4v13H3z" stroke-width="1.700"/><path d="M6 12h2v5H6zM9.500 14h2v3h-2zM13 10h2v7h-2z" fill="#3b3a39"/></svg>

      <svg viewBox="0 0 20 20"><path class="k" d="M9 4.500h9.500v12h-17V10M4 14.500h12"/><text x="12" y="12.500" class="n">123</text><path class="z" d="M4 .5h4.500L7 4.500h2L2 12l1-5.500H1z"/></svg>
      <svg viewBox="0 0 20 20"><path class="g" d="M8 2.500h10.500v3H8z"/><path class="k" d="M10 18.500H1.500V11M18.500 5v4M5 13h3v3H5z"/><path class="w" d="M10.500 10.500h9L16.500 14v5h-3v-5z"/><path class="z" d="M4 .5h4.500L7 4.500h2L2 12l1-5.500H1z"/></svg>
      <svg viewBox="0 0 20 20"><path class="b" d="M8 2.500h10.500l-2 7 2 9H2V12l6-3z"/><path d="M13 3l-1 5 1.500 3-3 3-.5 4" stroke="#f3f2f1" stroke-width="2.500" fill="none"/><circle cx="4" cy="4" r="3.300" fill="#d86b0c"/><path d="M1.500 6h5L4 12z" fill="#d86b0c"/><circle cx="4" cy="4" r="1" fill="#fff"/><circle cx="17" cy="16" r="2.500" fill="#d86b0c"/></svg>
      <svg viewBox="0 0 20 20" fill="#fff" stroke="#9b4fa8" stroke-width="1.200"><path d="M10 1.500l4 4-4 4-4-4zM5.500 6l4 4-4 4-4-4zM14.500 6l4 4-4 4-4-4zM10 10.500l4 4-4 4-4-4z"/></svg>
      <svg viewBox="0 0 20 20" fill="#fff" stroke="#1f84d6" stroke-width="1.300"><path d="M2 3h9.500l7 7-7 7H2l7-7zM7 3l7 7-7 7M3 15.500L8.500 10H14"/></svg>
      <svg viewBox="0 0 20 20" fill="#605e5c"><circle cx="3.500" cy="9" r=".9"/><circle cx="9.500" cy="9" r=".9" fill="#d86b0c"/><circle cx="15.500" cy="9" r=".9"/></svg>
    </div>
    <div class="wells">
      <div class="lbl">Values</div>
      <div class="well">Add data fields here</div>
      <div class="lbl strong">Drill through</div>
      <div class="tog"><span>Cross-report</span><i class="off"><em></em>Off</i></div>
      <div class="tog"><span>Keep all filters</span><i class="onn">On<em></em></i></div>
      <div class="well drill">Add drill-through fields here</div>
    </div>
  </aside>

  <aside class="data">
    <div class="head"><span>Data</span><svg width="14" height="14" viewBox="0 0 14 14" fill="none" stroke="#3b3a39" stroke-width="1.200"><path d="M1 1l5.500 6L1 13M7 1l5.500 6L7 13"/></svg></div>
    <div class="dsearch"><svg width="15" height="15" viewBox="0 0 15 15" fill="none" stroke="#605e5c" stroke-width="1.100"><circle cx="9.500" cy="5.500" r="4.500"/><path d="M6.300 8.800L.8 14"/></svg><span>Search</span></div>
    <div class="tree"><svg width="8" height="12" viewBox="0 0 8 12" fill="none" stroke="#8a8886" stroke-width="1.200"><path d="M1 1l5.500 5L1 11"/></svg><svg width="13" height="13" viewBox="0 0 13 13" fill="none" stroke="#3b3a39" stroke-width="1.200"><rect x=".7" y=".7" width="11.500" height="11.500" rx="2"/><path d="M.7 4.500h11.500M.7 8.500h11.500M4.500.7v11.500M8.500.7v11.500"/></svg><span>Data</span></div>
  </aside>
</main>

<footer class="status">
  <span>Page 1 of 2</span>
  <svg width="122" height="16" viewBox="0 0 122 16"><path d="M0 8h5M115 7.500h7M118.500 4v7" stroke="#605e5c" stroke-width="1.400"/><path d="M9 7.500h100" stroke="#605e5c"/><path d="M40 2.500h4v11h-4z" fill="#605e5c"/><path d="M59.500 5v5.500" stroke="#605e5c"/></svg>
  <span class="pct">69%</span>
  <svg class="fit" width="16" height="12" viewBox="0 0 16 12" fill="none" stroke="#605e5c"><path d="M.5.500h15v11H.5z" stroke="#7a6580"/><path d="M3 5V3h2M11 3h2v2M3 7v2h2M11 9h2V7"/></svg>
</footer>

<footer class="taskbar">
  <div class="start"><svg width="16" height="16" viewBox="0 0 16 16" fill="#fff"><path d="M0 2.300L6.500 1.400v6.200H0zM7.500 1.200L16 0v7.600H7.500zM0 8.500h6.500v6.200L0 13.800zM7.500 8.500H16V16l-8.500-1.200z"/></svg></div>
  <div class="tsearch"><svg width="17" height="17" viewBox="0 0 17 17" fill="none" stroke="#fff" stroke-width="1.200"><circle cx="10.500" cy="6" r="5"/><path d="M7 9.700L.8 16"/></svg><span>Type here to search</span></div>
  <div class="taskview"><svg width="18" height="16" viewBox="0 0 18 16" fill="none" stroke="#fff" stroke-width="1.200"><path d="M2 0v3h10V0M2 16v-3h10v3M2 5.500h10v5H2zM15.500 0v3M15.500 7v9"/><path d="M14.500 4h2.500v2h-2.500z" fill="#fff" stroke="none"/></svg></div>
  <div class="tsep"></div>
  <div class="apps">
    <div><svg viewBox="0 0 24 24"><circle cx="12" cy="12" r="12" fill="#1477c8"/><path d="M1 8C4-2 20-3 23.500 9c1 5-3 8-9 7 3-3 1-9-5-9C5 7 2 9 0 13z" fill="#3dc6b0"/><path d="M14 1c6 1 10 6 9.500 11-2 4-6 4-9 3 3-4 3-10-.5-14z" fill="#6fd84e"/><path d="M10 8c-5 6-2 13 4 15l7-4c-8 0-12-5-11-11z" fill="#0b4f9a"/><circle cx="6" cy="18" r="5.500" fill="#a5553d"/></svg></div>
    <div><svg viewBox="0 0 24 24"><path d="M0 6h6l2-3h8l2 3h6v16H0z" fill="#7d8790"/><circle cx="12" cy="13" r="7" fill="#e8ecf2"/><circle cx="12" cy="13" r="5" fill="#7b83eb"/><circle cx="13" cy="12" r="3" fill="#55b8f0"/></svg></div>
    <div><svg viewBox="0 0 24 24"><path d="M0 9L12 1l12 8v14H0z" fill="#0f5fa8"/><path d="M2 8h20v9H2z" fill="#fff"/><path d="M0 9l12 8L24 9v14H0z" fill="#2ba3ea"/></svg><b class="badge">19</b></div>
    <div><svg viewBox="0 0 24 24"><path d="M0 0h24v24H0z" fill="#0061fe"/><path d="M8 5.500l4 2.500-4 2.500L4 8zM16 5.500L20 8l-4 2.500L12 8zM8 10.500l4 2.500-4 2.500L4 13zM16 10.500l4 2.500-4 2.500-4-2.500zM12 14.500l4 2.500-4 2.500L8 17z" fill="#fff"/></svg></div>
    <div class="run"><svg viewBox="0 0 24 24"><path d="M1 3h9l2 3h11v4H1z" fill="#e5a31c"/><path d="M1 7h22v15H1z" fill="#fbd266"/><path d="M5 22v-8h14v8h-3.500v-4h-7v4z" fill="#2f8fd8"/></svg></div>
    <div><svg viewBox="0 0 24 24"><path d="M12 .5L3 6v12l5 3 3.500-4-2.500-2V9l6-3z" fill="#a58bf0"/><path d="M12 .5L22 6v8l-6-3V8l-5-2.500z" fill="#5b9af0"/><path d="M22 11v7l-10 5.500L6 20c5 1 10-2 10-7.500V10z" fill="#7a5fd8"/></svg></div>
    <div><svg viewBox="0 0 24 24"><path d="M2 1h11l5 5v15H2z" fill="#eee"/><path d="M5 5h8M5 8h10M5 11h10M5 14h6M5 17h5" stroke="#999"/><path d="M12 14c0-4 6-4 6-1v4h-5c-2 0-3 2-2 4-3-1-3-6 1-7z" fill="#3a78ab"/><path d="M18 14c4-1 5 6 2 7h-3v2h-4v-4h5z" fill="#ffd446"/></svg></div>
    <div><svg viewBox="0 0 24 24"><circle cx="12" cy="12" r="12" fill="#1ed760"/><path d="M5 8.500c5-1.500 10-1 14.500 1.300M6 12.500c4-1.200 8.500-.8 12 1.200M6.500 16.200c3.500-1 7-.6 10 1" stroke="#191414" stroke-width="2" fill="none" stroke-linecap="round"/></svg></div>
    <div><svg viewBox="0 0 24 24"><circle cx="14" cy="5" r="3.800" fill="#7b83eb"/><circle cx="21" cy="6" r="2.700" fill="#5059c9"/><path d="M9 9h10v10c-2 6-9 5-10 0z" fill="#7b83eb"/><path d="M19 10h5v6c0 4-4 4-5 3z" fill="#5059c9"/><path d="M0 6h12v12H0z" fill="#4b53bc"/><path d="M3 9h6M6 9v7" stroke="#fff" stroke-width="1.800"/></svg></div>
    <div><svg viewBox="0 0 24 24"><circle cx="12" cy="12" r="12" fill="#0e8a6d"/><path d="M17 8c-4-4-11-1-11 4s7 8 11 4v-3h-5M17 13v4" fill="none" stroke="#fff" stroke-width="2"/></svg></div>
    <div><svg viewBox="0 0 24 24"><path d="M0 0h24v24H0z" fill="#000"/><path d="M8 4h3v16H8zM13 4h3v16h-3z" fill="#b20710"/><path d="M8 4h3l5 16h-3z" fill="#e50914"/></svg></div>
    <div><svg viewBox="0 0 24 24" fill="none"><circle cx="12" cy="12" r="10.500" stroke="#43b02a" stroke-width="3" stroke-dasharray="2 1"/><path d="M12 1.500a10.500 10.500 0 0 1 0 21" stroke="#43b02a" stroke-width="3.500"/></svg></div>
    <div><svg viewBox="0 0 24 24" fill="none"><path d="M1 23l2-6A10.800 10.800 0 1 1 7 21.500z" stroke="#25d366" stroke-width="2.200"/><path d="M8 6c-4 3 5 13 10 10l-1-3-2-1-2 1.500-3-3L11.500 9z" fill="#25d366"/></svg><b class="badge">4</b></div>
  </div>
  <div class="scroll"><svg width="9" height="6" viewBox="0 0 9 6"><path d="M1 5l3.500-3.500L8 5" fill="none" stroke="#000" stroke-width="1.700"/></svg><svg width="9" height="6" viewBox="0 0 9 6"><path d="M1 1l3.500 3.500L8 1" fill="none" stroke="#555" stroke-width="1.500"/></svg></div>
  <svg class="help" width="24" height="24" viewBox="0 0 24 24"><circle cx="11" cy="12" r="10.500" fill="#fff"/><circle cx="11" cy="12" r="9" fill="#1487ce"/><path d="M7.500 9c0-5 8-4 7 0-.5 2-3.500 2.500-3.500 5.500M11 16.500v2.500" stroke="#fff" stroke-width="2.300" fill="none"/><circle cx="18.500" cy="18" r="5" fill="#f2a81d"/><path d="M18.500 15v6" stroke="#fff" stroke-width="1.500"/></svg>
  <svg class="weather" width="26" height="24" viewBox="0 0 26 24"><path d="M3 9c-5-1-2-6 1-5 2-5 8-3 8 0 4 1 3 5 0 5z" fill="#c5d8f3"/><path d="M15 9c4 3 4 10-1 12-5 2-9-1-10-4 6 1 11-2 11-8z" fill="#f59d20"/><path d="M14 23c-5-1-2-6 1-5 2-5 8-3 8 0 4 1 3 5 0 5z" fill="#c5d8f3"/><circle cx="19" cy="6.500" r="6.300" fill="#c42b1c"/><text x="19" y="10">1</text></svg>
  <span class="temp">27°C</span>
  <svg class="tray" width="135" height="20" viewBox="0 0 135 20" fill="none" stroke="#fff" stroke-width="1.200"><path d="M1 12.500l5.500-5 5.500 5"/><path d="M27 16c0-6 5-10 11-10M30 17c0-5 3.500-8 8-8M33 17.500c0-3 2-5.500 5-5.500" stroke="#ccc"/><circle cx="37" cy="16" r="1.300" fill="#fff"/><path d="M50.500 6h7v8h-7zM58 8.500l2.500-1.500v6L58 11.500M50 4q4.500-3 8 0M50 16.500q4.500 3 8 0"/><path d="M72.500 6.500h12v7h-12z"/><path d="M74 8h4v4h-4z" fill="#fff" stroke="none"/><path d="M86 8.500v3"/><path d="M103 14.500l-7 1V5l15-2v8M100 11c0-4 5-5 6-2v-2M107 10c0 4-5 4-6 2"/><circle cx="108" cy="14.500" r="3.300" fill="#2b7cd3" stroke="none"/><path d="M119.500 8h3l3.500-3v10l-3.500-3h-3zM128 8q1.500 2 0 4M130.500 6q3 4 0 8M133 4.500q3.500 5.500 0 11"/></svg>
  <span class="eng">ENG</span>
  <div class="clock">20:55<br>17-12-2023</div>
  <div class="notif"><svg width="26" height="26" viewBox="0 0 26 26"><path d="M1 2h16v12H9l-4 4v-4H1z" fill="#fff"/><path d="M4 5h10M4 8h10M4 11h6" stroke="#2b2725"/><circle cx="16.500" cy="17.500" r="8" fill="#3b3a39" stroke="#aaa"/><text x="16.500" y="22">6</text></svg></div>
</footer>
<script src="donut.js"></script>
</body>
</html>
```

FILE: styles.css
```css
* { box-sizing: border-box; }
body { margin: 0; width: 1366px; height: 768px; overflow: hidden; display: flex; flex-direction: column; font: 11.5px "Open Sans", "Noto Sans", sans-serif; color: #252423; background: #fff; }
svg { display: block; flex: none; }
.titlebar { height: 34px; background: #3b3a39; color: #fff; display: flex; align-items: center; flex: none; white-space: nowrap; }
.quick { width: 102px; padding-left: 17px; }
.doc-name { width: 335px; padding-top: 5px; font-size: 11.5px; letter-spacing: -.08px; }
.doc-caret { margin: 3px 0 0; }
.top-search { width: 400px; height: 24px; margin-left: 137px; background: #d4d4d2; display: flex; align-items: center; gap: 11px; padding-left: 17px; border-radius: 2px; color: #205c50; font-size: 13px; }
.user { width: 96px; margin-left: 109px; font-size: 11.5px; letter-spacing: 0; }
.avatar { margin-left: 10px; }
.winbtns { display: flex; margin-left: 15px; }
.tabs { height: 34px; flex: none; background: #fafafa; display: grid; grid-template-columns: 58px 70px 66px 90px 61px 88px 820px 84px; padding: 0 0 0 23px; font-size: 13.5px; letter-spacing: -.1px; }
.tabs a { justify-self: start; height: 31px; line-height: 32px; }
.tabs a:nth-child(3) { letter-spacing: -.5px; }
.tabs a:first-child { letter-spacing: -.3px; }
.tabs a.active { font-weight: 600; border-bottom: 3px solid #117865; letter-spacing: -.4px; }
.share { height: 24px; width: 84px; margin-top: 4px; padding: 0 7px; border: 0; border-radius: 3px; background: #117865; color: #fff; display: flex; align-items: center; gap: 8px; font: 600 12px "Open Sans"; letter-spacing: -.6px; }
.share span + svg { margin-left: -3px; }
.ribbon { height: 92px; flex: none; background: #fafafa; display: flex; padding-top: 2px; box-shadow: 0 1px 4px rgba(0,0,0,.25); position: relative; z-index: 2; }
.group { height: 88px; border-right: 1px solid #d2d0ce; display: flex; flex-direction: column; }
.tools { display: flex; height: 77px; flex: none; padding-top: 5px; }
.label { text-align: center; font-size: 9.8px; line-height: 13px; color: #323130; padding-top: 1px; }
.btn { display: flex; flex-direction: column; align-items: center; text-align: center; line-height: 16px; font-size: 11.8px; letter-spacing: -.3px; white-space: nowrap; color: #323130; }
.btn span { padding-top: 2px; }
.disabled, .disabled .btn { color: #c3c1bf; }
.g-clip { width: 161px; } .g-data { width: 383px; } .g-query { width: 117px; } .g-insert { width: 148px; } .g-calc { width: 115px; } .g-sens { width: 74px; } .g-share { width: 59px; }
.g-data .tools, .g-query .tools, .g-insert .tools { padding-left: 8px; }
.g-calc .tools { padding-left: 7px; } .g-sens .tools { padding-left: 6px; }
.w36 { width: 36px; } .w40 { width: 40px; } .w44 { width: 44px; } .w48 { width: 48px; } .w50 { width: 50px; } .w56 { width: 56px; } .w58 { width: 58px; } .w60 { width: 60px; } .w74 { width: 74px; }
.paste { width: 40px; margin-left: 8px; }
.small-list { margin: -5px 0 0 4px; font-size: 11.8px; letter-spacing: -.3px; }
.small-list div { display: flex; align-items: center; gap: 4px; height: 24px; white-space: nowrap; }
.chev { display: inline-block; width: 4.5px; height: 4.5px; border: solid #3b3a39; border-width: 0 1.3px 1.3px 0; transform: rotate(45deg); margin: 0 1px 2px 5px; }
.chev.lone { border-color: #b3b1af; margin: 0 0 4px; vertical-align: middle; }
.collapse { margin: 77px 0 0 294px; }
.workspace { height: 543px; flex: none; display: flex; background: #f3f2f1; }
.rail { width: 41px; border-right: 1px solid #e1dfdd; }
.rail div { height: 40px; display: flex; align-items: center; justify-content: center; padding-left: 1px; }
.rail .sel { border-left: 3px solid #117865; padding: 0 2px 0 0; }
.center { width: 963px; display: flex; flex-direction: column; }
.upper { height: 508px; display: flex; background: #fff; }
.canvas { width: 930px; padding-left: 19px; }
.page { width: 892px; height: 502px; border: 2px dotted #605e5c; border-top: 0; padding: 10px 0 0 10px; }
.row { display: flex; align-items: flex-start; width: 880px; }
.row1 { height: 87px; } .row2 { height: 211px; gap: 16px; } .row3 { gap: 9px; }
.banner, .card { height: 74px; background: #070707; color: #fff; box-shadow: 4px 5px 8px rgba(0,0,0,.4); text-align: center; }
.banner { width: 508px; font: 30px/64px "Liberation Serif", serif; letter-spacing: -.16px; padding-right: 14px; position: relative; }
.banner small { position: absolute; left: 252px; top: 2px; font: 8px/16px "Open Sans"; color: #2b2b2b; }
.card { display: flex; flex-direction: column; align-items: center; }
.card b { font: 500 38px/44px Roboto, sans-serif; padding-top: 13px; height: 55px; }
.card span { font-size: 11px; line-height: 18px; letter-spacing: -.2px; }
.c1 { width: 174px; margin-left: 11px; } .c1 b { letter-spacing: -1.4px; }
.c2 { width: 162px; margin-left: 14px; } .c2 b { letter-spacing: -.8px; }
.visual { background: #9eff9e; overflow: hidden; }
.row2 .v317 { margin-right: -1px; }
.v266 { width: 266px; } .v317 { width: 317px; } .v264 { width: 264px; } .v159 { width: 159px; } .v262 { width: 262px; }
.light { margin-left: 5px; }
h3 { margin: 0; height: 21px; background: #000; color: #fff; text-align: center; font: 500 14px/16px Roboto, sans-serif; letter-spacing: -.03px; }
h3.two { height: 39px; }
.visual text, .visual g text { font-family: "Open Sans", sans-serif; }
.lg { font-size: 8.600px; fill: #4a6b4a; } .lg.bold { font-weight: 600; } .lg.s { font-size: 8px; fill: #335533; }
.ax { font-size: 8.600px; fill: #5a8a5a; } .ax.s { font-size: 8px; }
.tt { font-size: 8.800px; fill: #2c402c; } .tt.s { font-size: 7.300px; }
.dl { font-size: 7.800px; fill: #648a64; } .dl.mid { text-anchor: middle; letter-spacing: -.2px; } .dl.dark { fill: #3c603c; } .dl.white { fill: #fff; font-weight: 600; }
.cat { font-size: 8.600px; font-weight: 600; fill: #1f301f; } .cat.rot { text-anchor: end; } .cat.s { font-size: 8px; }
.ln { fill: none; stroke-width: 2; }
.grid path { stroke: #8ddb90; stroke-dasharray: 1 4; fill: none; } .grid.strong path { stroke: #70b572; }
.lead { fill: none; stroke: #7fb87f; }
.filters { width: 33px; border-left: 1px solid #a19f9d; display: flex; flex-direction: column; align-items: center; padding-top: 12px; gap: 15px; }
.filters span { writing-mode: vertical-rl; font: 600 14px "Open Sans"; letter-spacing: 0; margin-top: -7px; }
.pagetabs { height: 35px; display: flex; align-items: flex-start; border-bottom: 1px solid #e1dfdd; background: #f3f2f1; }
.dev { width: 24px; height: 31px; display: flex; justify-content: center; align-items: center; margin-left: 10px; }
.dev.on { border-bottom: 3px solid #117865; } .dev + .dev { margin-left: 20px; }
.pgarrows { margin: 13px 0 0 15px; }
.pg { width: 76px; height: 35px; border-left: 1px solid #c8c6c4; background: #fff; text-align: center; line-height: 35px; letter-spacing: -.25px; font-size: 12px; padding-right: 1px; }
.pg.on { margin-left: 7px; border-bottom: 4px solid #117865; }
.plus { width: 39px; height: 32px; margin-top: 2px; background: #117865; color: #fff; font: 700 20px/31px "Open Sans"; text-align: center; }
.viz { width: 181px; border-left: 1px solid #d8d6d4; }
.data { width: 181px; border-left: 1px solid #d8d6d4; }
.head { display: flex; justify-content: space-between; align-items: center; font: 600 14.500px/20px "Open Sans"; padding: 10px 7px 0 8px; letter-spacing: 0; }
.head svg { margin-top: -2px; }
.data .head { padding-right: 7px; }
.viz .head span { letter-spacing: .1px; }
.sub { font: 600 11.500px/16px "Open Sans"; padding: 7px 8px 0; letter-spacing: -.15px; }
.modes { display: flex; gap: 34px; padding: 4px 8px 0; }
.mode { width: 32px; height: 32px; display: flex; align-items: center; justify-content: center; }
.mode.on { background: #d2d0ce; }
.notch { margin-top: 4px; margin-left: -1px; width: 181px; }
.vgrid { display: grid; grid-template-columns: repeat(6, 28px); grid-auto-rows: 28px; padding: 6px 0 0 6px; height: 206px; place-items: center; border-bottom: 1px solid #d8d6d4; }
.vgrid svg { width: 20px; height: 20px; }
.w { fill: #fff; stroke: #3b3a39; } .b { fill: #83beec; stroke: #1068b8; } .g { fill: #c8c6c4; stroke: #797775; } .k { fill: none; stroke: #3b3a39; } .bl { fill: none; stroke: #1f84d6; stroke-width: 1.300; } .o { fill: #f0902e; stroke: #c65d00; } .z { fill: #fcd98b; stroke: #e0700a; }
.n { font: 8px "Open Sans"; fill: #1068b8; text-anchor: middle; } .rp { font: 700 15px "Open Sans"; fill: #1f84d6; text-anchor: middle; letter-spacing: -.3px; }
.wells { padding: 9px 6px 0 4px; font-size: 11.800px; letter-spacing: -.1px; }
.lbl { padding-left: 8px; line-height: 18px; color: #484644; letter-spacing: -.25px; } .lbl.strong { font-weight: 600; padding-top: 9px; letter-spacing: -.3px; }
.well { height: 28px; margin-top: 4px; border: 1px dashed #c8c6c4; background: #fff; line-height: 27px; padding-left: 10px; white-space: nowrap; }
.well.drill { margin-top: 5px; padding-left: 8px; height: 26px; line-height: 25px; letter-spacing: -.15px; }
.tog { display: flex; justify-content: space-between; align-items: center; height: 27px; padding: 0 16px 0 8px; letter-spacing: -.25px; }
.lbl.strong + .tog { margin-top: 3px; }
.tog i { width: 32px; height: 16px; border-radius: 8px; font: 9.500px "Open Sans"; display: flex; align-items: center; justify-content: center; gap: 2px; letter-spacing: -.2px; }
.tog em { width: 8px; height: 8px; border-radius: 50%; background: #605e5c; }
.off { border: 1px solid #605e5c; color: #605e5c; } .onn { background: #117865; color: #fff; } .onn em { background: #fff; margin-left: 2px; }
.dsearch { height: 27px; width: 172px; margin: 15px 0 0 4px; border: 1px solid #605e5c; border-radius: 2px; display: flex; align-items: center; gap: 6px; padding-left: 7px; font-size: 12.500px; color: #484644; }
.tree { display: flex; align-items: center; padding: 14px 0 0 9px; gap: 6px; font-size: 11.500px; letter-spacing: -.2px; color: #484644; }
.tree span { margin-left: -1px; }
.status { height: 24px; flex: none; background: #f3f2f1; display: flex; align-items: center; padding-left: 5px; font-size: 11.500px; letter-spacing: .05px; color: #484644; }
.status > span:first-child { width: 1148px; }
.status .pct { margin-left: 17px; width: 39px; }
.taskbar { height: 41px; flex: none; display: flex; align-items: center; border-top: 1px solid #000; color: #fff; background: linear-gradient(90deg, #2b211e 0, #251f1d 40px, #1e1e1e 350px, #1e1e1e 900px, #2c2422 1020px, #2c2422 100%); }
.start { width: 48px; padding-left: 16px; }
.tsearch { width: 288px; height: 40px; background: #323232; border: 1px solid #565656; display: flex; align-items: center; gap: 11px; padding-left: 11px; font-size: 14px; letter-spacing: 0; color: #ddd; }
.taskview { padding-left: 14px; width: 55px; }
.tsep { width: 3px; height: 16px; border: solid #555; border-width: 0 1px; }
.apps { display: flex; margin-left: 13px; }
.apps div { width: 38px; height: 40px; display: flex; align-items: center; justify-content: center; position: relative; }
.apps svg { width: 24px; height: 24px; }
.run::after { content: ""; position: absolute; left: 5px; right: 4px; bottom: 0; height: 2px; background: #76b9ed; }
.badge { position: absolute; left: 19px; top: 18px; width: 18px; height: 18px; border-radius: 50%; background: #333; border: 1px solid #aaa; font: 700 10.500px/15px "Open Sans"; text-align: center; letter-spacing: -.5px; }
.scroll { width: 17px; height: 40px; margin-left: 3px; background: linear-gradient(#dadada 17px, #f3f3f3 17px); display: flex; flex-direction: column; align-items: center; justify-content: space-between; padding: 6px 0 5px; }
.help { margin-left: 12px; } .weather { margin-left: 24px; }
.weather text, .notif text { font: 10px "Open Sans"; fill: #fff; text-anchor: middle; } .notif text { font: 600 12px "Open Sans"; }
.temp { margin-left: 7px; width: 55px; font-size: 13.500px; letter-spacing: -.3px; }
.eng { margin-left: 9px; width: 29px; font-size: 12px; letter-spacing: -.6px; }
.clock { width: 72px; text-align: center; line-height: 18px; font-size: 11.500px; letter-spacing: -.2px; }
.notif { margin-left: 10px; width: 38px; border-right: 1px solid #777; height: 40px; padding-top: 10px; }
```

FILE: donut.js
```javascript
const g = document.getElementById("donut");
const cx = 779.7, cy = 368.7, outer = 56.5, inner = 33.7;
const vivid = ["#118dff", "#12239e", "#e66c37", "#6b007b", "#e044a7", "#744ec2", "#d9b300", "#d64550", "#197278", "#1aab40", "#15c6f4", "#4092ff", "#ffa058", "#be5dc9", "#f472d0", "#b5a1ff", "#c4a200", "#ff8080", "#00dbbc", "#5bd667", "#0091d5", "#4668c5", "#ff6300", "#99008a", "#ec008c", "#533285", "#99700a", "#ff4141", "#1f9a85", "#25891c", "#0057a2", "#002050", "#c94f0f", "#450f54", "#b60064", "#34124f", "#6a5a29", "#1aab40", "#ba141a", "#0c3d37", "#0b511f"];
const tones = [
  ["#f2f26b", "#f4b66a", "#b8d8f0", "#5a7ab8", "#e8c8f4", "#8a6a9a", "#f6e27a", "#5a8a7a", "#cfd0cf"],
  ["#1a2c33", "#4e5a2c", "#2c5a3c", "#7a7a3c", "#9a6a3c", "#2c3a5a", "#5c7a8c"],
  ["#b8f23c", "#24345a", "#8c7ac8", "#8a8a7a", "#c8c8f0", "#2c4a3c", "#a888b8"],
  ["#22303a", "#3a4a3c", "#2f6a3c", "#66509a", "#8a9a8a", "#4cc84c", "#454a45"],
  ["#5a4a6a", "#8acf8a", "#2f5a38", "#a888b8", "#4f5f6f", "#2c3a2c", "#706850"],
  ["#7fbf9f", "#8a5f6a", "#5adf8a", "#7a5a7a", "#3f4f3f", "#7adfc0", "#4f5f4f"],
  ["#3f5a4a", "#5a7a5a", "#3f4540", "#8a6a6a", "#6aaa9a", "#6a5a4a"],
  ["#4f5f50", "#54604f", "#7b8f7d", "#78808a", "#a0a89a", "#5a635f"]
];
const at = (r, a) => (cx + r * Math.sin(a)).toFixed(2) + " " + (cy - r * Math.cos(a)).toFixed(2);
let start = 0, i = 0;
while (start < 359.8) {
  let size = i === 0 ? 7.2 : i === 1 ? 4.9 : Math.max(0.85, 3.9 * Math.pow(0.93, i - 2) + 0.6 - start / 900);
  if (start > 100) size = Math.max(0.95, 1.7 - start / 480);
  const end = Math.min(360, start + size);
  const set = tones[Math.min(7, Math.max(0, Math.floor((start - 98) / 33)))];
  // Each slice runs slightly under the next one so no seam shows between them.
  const a = start * Math.PI / 180, b = Math.min(360, end + 0.5) * Math.PI / 180;
  const p = document.createElementNS("http://www.w3.org/2000/svg", "path");
  p.setAttribute("d", `M${at(outer, a)}A${outer} ${outer} 0 0 1 ${at(outer, b)}L${at(inner, b)}A${inner} ${inner} 0 0 0 ${at(inner, a)}z`);
  p.setAttribute("fill", start < 98 ? vivid[i % vivid.length] : set[(i * 5) % set.length]);
  g.appendChild(p);
  start = end;
  i++;
}
```
